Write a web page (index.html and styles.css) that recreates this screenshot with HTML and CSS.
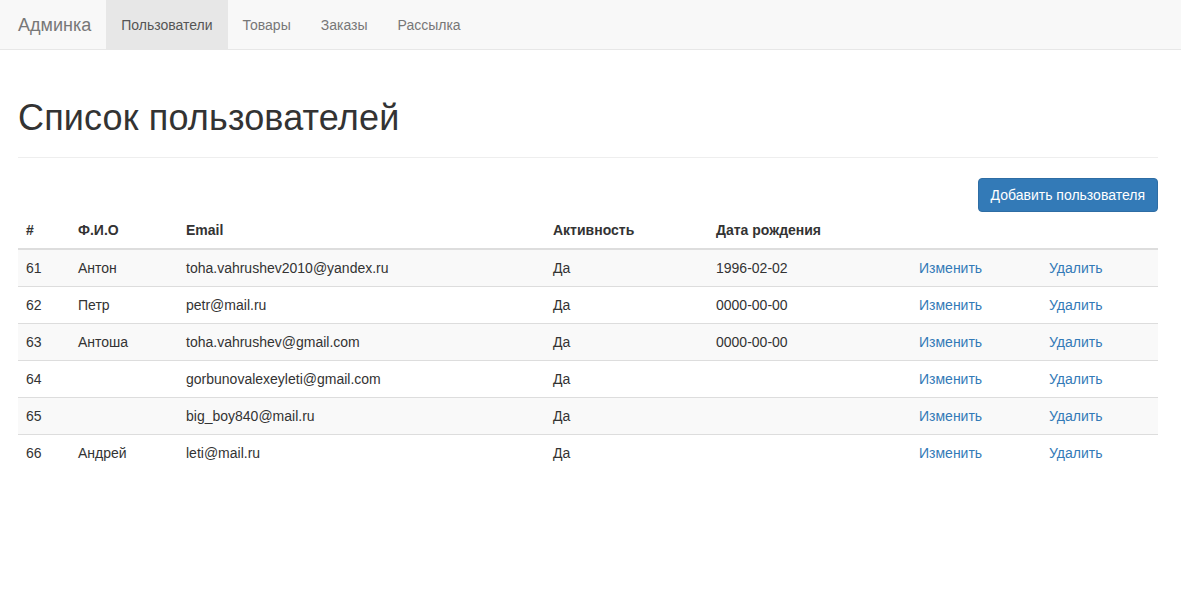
FILE: index.html
```html
<!DOCTYPE html>
<html lang="ru">
<head>
<meta charset="utf-8">
<title>Админка</title>
<link rel="stylesheet" href="styles.css">
</head>
<body>
<nav class="navbar">
  <div class="container nav-inner">
    <a class="brand" href="#">Админка</a>
    <ul class="nav">
      <li class="active"><a href="#">Пользователи</a></li>
      <li><a href="#">Товары</a></li>
      <li><a href="#">Заказы</a></li>
      <li><a href="#">Рассылка</a></li>
    </ul>
  </div>
</nav>
<main class="container">
  <div class="page-header"><h1>Список пользователей</h1></div>
  <div class="actions"><a class="btn" href="#">Добавить пользователя</a></div>
  <table class="table">
    <thead>
      <tr>
        <th class="c-id">#</th>
        <th class="c-name">Ф.И.О</th>
        <th class="c-email">Email</th>
        <th class="c-act">Активность</th>
        <th class="c-date">Дата рождения</th>
        <th class="c-edit"></th>
        <th class="c-del"></th>
      </tr>
    </thead>
    <tbody>
      <tr><td>61</td><td>Антон</td><td>toha.vahrushev2010@yandex.ru</td><td>Да</td><td>1996-02-02</td><td><a href="#">Изменить</a></td><td><a href="#">Удалить</a></td></tr>
      <tr><td>62</td><td>Петр</td><td>petr@mail.ru</td><td>Да</td><td>0000-00-00</td><td><a href="#">Изменить</a></td><td><a href="#">Удалить</a></td></tr>
      <tr><td>63</td><td>Антоша</td><td>toha.vahrushev@gmail.com</td><td>Да</td><td>0000-00-00</td><td><a href="#">Изменить</a></td><td><a href="#">Удалить</a></td></tr>
      <tr><td>64</td><td></td><td>gorbunovalexeyleti@gmail.com</td><td>Да</td><td></td><td><a href="#">Изменить</a></td><td><a href="#">Удалить</a></td></tr>
      <tr><td>65</td><td></td><td>big_boy840@mail.ru</td><td>Да</td><td></td><td><a href="#">Изменить</a></td><td><a href="#">Удалить</a></td></tr>
      <tr><td>66</td><td>Андрей</td><td>leti@mail.ru</td><td>Да</td><td></td><td><a href="#">Изменить</a></td><td><a href="#">Удалить</a></td></tr>
    </tbody>
  </table>
</main>
</body>
</html>
```
FILE: styles.css
```css
* { box-sizing: border-box; }
html, body { margin: 0; padding: 0; }
body {
  font-family: "Liberation Sans", Arial, Helvetica, sans-serif;
  font-size: 14px;
  line-height: 20px;
  color: #333;
  background: #fff;
}
a { color: #337ab7; text-decoration: none; }
.container { width: 1140px; margin-left: 18px; }
.navbar {
  background: #f8f8f8;
  border-bottom: 1px solid #e7e7e7;
  height: 50px;
}
.nav-inner { display: flex; align-items: stretch; height: 49px; }
.brand {
  display: block;
  color: #777;
  font-size: 18px;
  line-height: 20px;
  padding: 15px 15px 14px 0;
}
.nav { list-style: none; margin: 0; padding: 0; display: flex; }
.nav li a {
  display: block;
  padding: 15px 15px 14px;
  color: #777;
  line-height: 20px;
}
.nav li.active a { background: #e7e7e7; color: #555; }
.page-header {
  margin: 48px 0 20px;
  padding-bottom: 9px;
  border-bottom: 1px solid #eee;
}
.page-header h1 {
  margin: 0 0 10px;
  font-size: 36px;
  font-weight: 500;
  line-height: 39.6px;
  letter-spacing: 0.15px;
}
.actions { display: flex; justify-content: flex-end; }
.btn {
  display: inline-block;
  color: #fff;
  background: #337ab7;
  border: 1px solid #2e6da4;
  border-radius: 4px;
  padding: 6px 12px;
  line-height: 20px;
  font-size: 14px;
}
.table { width: 100%; border-collapse: collapse; border-spacing: 0; }
.table th, .table td {
  padding: 8px;
  text-align: left;
  vertical-align: top;
  line-height: 20px;
}
.table th { font-weight: bold; border-bottom: 2px solid #ddd; }
.table td { border-top: 1px solid #ddd; }
.table tbody tr:first-child td { border-top: 0; }
.table tbody tr:nth-child(odd) { background: #f9f9f9; }
.c-id { width: 52px; }
.c-name { width: 108px; }
.c-email { width: 367px; }
.c-act { width: 163px; }
.c-date { width: 203px; }
.c-edit { width: 130px; }
.c-del { width: 117px; }
```
